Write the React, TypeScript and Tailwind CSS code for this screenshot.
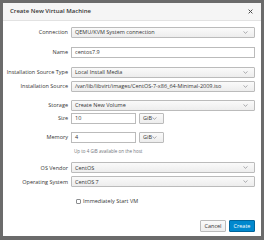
import React from "react";

const font = { fontFamily: '"Open Sans", "Liberation Sans", sans-serif' };

function Chevron() {
  return (
    <svg width="5" height="3" viewBox="0 0 5 3" className="shrink-0">
      <path d="M0.5 0.5 L2.5 2.3 L4.5 0.5" fill="none" stroke="#8b8d8f" strokeWidth="0.7" />
    </svg>
  );
}

function Select({ value, className = "" }: { value: string; className?: string }) {
  return (
    <div
      className={
        "h-[11px] flex items-center justify-between pl-[3px] pr-[6px] border border-[#bbbbbb] rounded-[1px] bg-gradient-to-b from-[#fafafa] to-[#ededed] text-[#363636] " +
        className
      }
    >
      <span className="leading-[1.2] whitespace-nowrap">{value}</span>
      <Chevron />
    </div>
  );
}

function Input({ value, className = "" }: { value: string; className?: string }) {
  return (
    <div
      className={
        "h-[11px] flex items-center pl-[3px] border border-[#bbbbbb] bg-white text-[#363636] " + className
      }
    >
      <span className="leading-[1.2] whitespace-nowrap">{value}</span>
    </div>
  );
}

function Row({ label, children, className = "" }: { label: string; children: React.ReactNode; className?: string }) {
  return (
    <div className={"flex items-center " + className}>
      <div className="w-[68px] shrink-0 text-right pr-[3px] text-[#363636] leading-[1.2] whitespace-nowrap">{label}</div>
      <div className="flex-1 pr-[6px]">{children}</div>
    </div>
  );
}

export default function App() {
  return (
    <div className="w-[264px] h-[240px] bg-[#6b6b6b] pt-[3px] pl-[3px] pr-[3px] pb-[4px]" style={font}>
      <div className="w-full h-full bg-white flex flex-col text-[5.5px]">
        <div className="h-[18px] shrink-0 bg-[#f5f5f5] border-b border-[#e2e2e2] flex items-center justify-between pl-[7px] pr-[8px]">
          <span className="font-semibold text-[6px] text-[#363636] leading-[1.2]">Create New Virtual Machine</span>
          <svg width="5" height="5" viewBox="0 0 5 5">
            <path d="M0.6 0.6 L4.4 4.4 M4.4 0.6 L0.6 4.4" stroke="#4d4d4d" strokeWidth="1" />
          </svg>
        </div>

        <Row label="Connection" className="mt-[6px]">
          <Select value="QEMU/KVM System connection" />
        </Row>
        <Row label="Name" className="mt-[9px]">
          <Input value="centos7.9" />
        </Row>
        <Row label="Installation Source Type" className="mt-[9px]">
          <Select value="Local Install Media" />
        </Row>
        <Row label="Installation Source" className="mt-[3px]">
          <Select value="/var/lib/libvirt/images/CentOS-7-x86_64-Minimal-2009.iso" />
        </Row>
        <Row label="Storage" className="mt-[8px]">
          <Select value="Create New Volume" />
        </Row>
        <Row label="Size" className="mt-[2px]">
          <div className="flex items-center gap-[3px]">
            <Input value="10" className="w-[65px]" />
            <Select value="GiB" className="w-[25px] pr-[4px]" />
          </div>
        </Row>
        <Row label="Memory" className="mt-[8px]">
          <div className="flex items-center gap-[3px]">
            <Input value="4" className="w-[65px]" />
            <Select value="GiB" className="w-[25px] pr-[4px]" />
          </div>
        </Row>
        <div className="pl-[71px] mt-[6px] text-[4.5px] text-[#72767b] leading-[1.2]">Up to 4 GiB available on the host</div>
        <Row label="OS Vendor" className="mt-[8px]">
          <Select value="CentOS" />
        </Row>
        <Row label="Operating System" className="mt-[3px]">
          <Select value="CentOS 7" />
        </Row>
        <div className="flex items-center pl-[73px] mt-[11px]">
          <div className="w-[5px] h-[5px] border border-[#8b8d8f] rounded-[1px] bg-white" />
          <span className="ml-[2px] text-[#363636] leading-[1.2]">Immediately Start VM</span>
        </div>
        <div className="flex-1" />
        <div className="flex justify-end gap-[3px] pr-[6px] pb-[4px]">
          <div className="h-[12px] w-[26px] flex items-center justify-center border border-[#bbbbbb] rounded-[1px] bg-gradient-to-b from-[#fafafa] to-[#ededed] text-[#363636] leading-[1.2]">
            Cancel
          </div>
          <div className="h-[12px] w-[26px] flex items-center justify-center border border-[#00659c] rounded-[1px] bg-[#0088ce] text-white leading-[1.2]">
            Create
          </div>
        </div>
      </div>
    </div>
  );
}
